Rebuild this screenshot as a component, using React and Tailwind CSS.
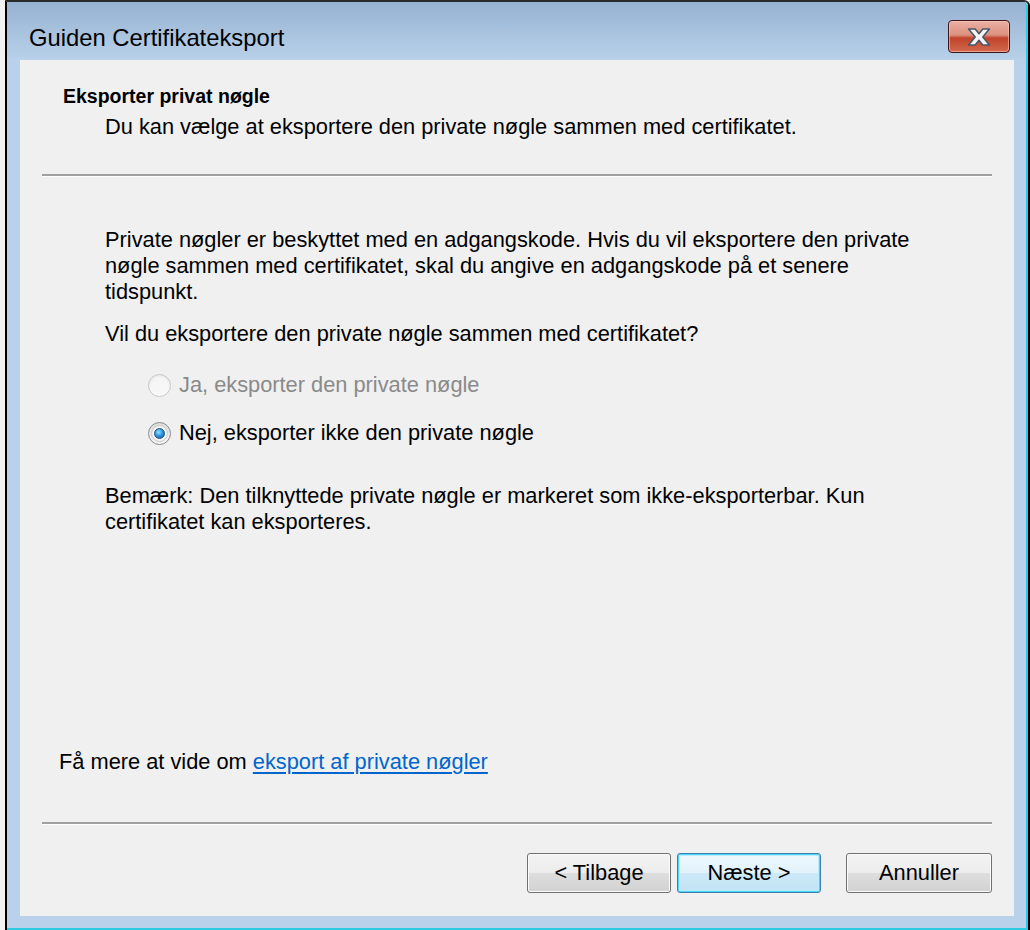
import React from 'react';

const font = { fontFamily: '"Liberation Sans", Arial, sans-serif' };

function CloseButton() {
  return (
    <div className="w-[62px] h-[33px] rounded-[4px] border border-[#3f1418] bg-[linear-gradient(to_bottom,#eab0a2_0%,#dc9180_45%,#c1432a_55%,#d3694e_100%)] shadow-[inset_0_0_0_1px_rgba(255,210,200,0.55)] flex items-center justify-center">
      <svg width="24" height="18" viewBox="-1 -1 24 19">
        <path
          d="M0 0 H7 L11 5 L15 0 H22 L15 8.5 L22 17 H15 L11 12 L7 17 H0 L7 8.5 Z"
          fill="#f4f4f4"
          stroke="#4b5568"
          strokeWidth="1.6"
          strokeLinejoin="round"
        />
      </svg>
    </div>
  );
}

function Radio({ checked, disabled, label }) {
  return (
    <div className="flex items-center h-[26px] pl-[128px]">
      {checked ? (
        <div className="w-[23px] h-[23px] rounded-full border border-[#8a8b8c] bg-[linear-gradient(to_bottom,#dcdcdc,#f6f6f6)] flex items-center justify-center">
          <div className="w-[17px] h-[17px] rounded-full bg-[#f4f4f4] border border-[#c8c8c8] flex items-center justify-center">
            <div className="w-[11px] h-[11px] rounded-full border border-[#1c4f86] bg-[radial-gradient(circle_at_40%_35%,#9fe2ff_0%,#2d9be0_45%,#0c4f95_100%)]" />
          </div>
        </div>
      ) : (
        <div className="w-[23px] h-[23px] rounded-full border border-[#c7c7c7] bg-[linear-gradient(to_bottom,#ececec,#fbfbfb)] flex items-center justify-center">
          <div className="w-[17px] h-[17px] rounded-full bg-[#f6f6f6]" />
        </div>
      )}
      <span className={`ml-[8px] ${disabled ? 'text-[#8a8a8a]' : 'text-black'}`}>{label}</span>
    </div>
  );
}

function Separator() {
  return (
    <div className="mx-[22px]">
      <div className="h-[2px] bg-[#a0a0a0]" />
      <div className="h-[1px] bg-white" />
    </div>
  );
}

function Button({ children, primary, width }) {
  const base = 'h-[40px] rounded-[3px] border flex items-center justify-center text-black';
  const look = primary
    ? 'border-[#3c7fb1] bg-[linear-gradient(to_bottom,#eef8fd_0%,#e1f2fb_50%,#cde9f7_50%,#c0e3f5_100%)] shadow-[inset_0_0_0_1px_#4fd4f8,inset_0_0_0_2px_#b6ecfb]'
    : 'border-[#707070] bg-[linear-gradient(to_bottom,#f3f3f3_0%,#ececec_50%,#dedede_50%,#d2d2d2_100%)] shadow-[inset_0_0_0_1px_#fbfbfb]';
  return (
    <div className={`${base} ${look} ${width}`}>{children}</div>
  );
}

export default function App() {
  return (
    <div className="w-[1030px] h-[930px] flex bg-[#eef0f3] overflow-hidden text-[21.8px] leading-[26px]" style={font}>
      <div className="w-[5px] h-full bg-[#f2f2f2]" />
      <div className="flex-1 h-full border-l-2 border-l-black border-r-2 border-r-black border-t-2 border-t-[#2a2a2a] rounded-tr-[6px]">
        <div className="h-full flex flex-col border-r-2 border-r-[#2ccbe2] border-b-2 border-b-[#2ccbe2] rounded-tr-[5px] bg-[linear-gradient(to_bottom,#96b2d1_0px,#b9d1ea_58px,#b9d1ea_100%)]">
          {/* title bar */}
          <div className="h-[58px] flex justify-between items-start pl-[22px] pr-[16px] pt-[18px]">
            <div className="text-[23.8px] leading-[30px] mt-[3px] text-black">Guiden Certifikateksport</div>
            <CloseButton />
          </div>

          {/* content */}
          <div className="flex-1 flex pl-[13px] pr-[12px] pb-[12px]">
            <div className="flex-1 bg-[#f0f0f0] flex flex-col">
              <div className="mt-[24px] pl-[43px] font-bold text-[19.5px] leading-[24px]">Eksporter privat nøgle</div>
              <div className="mt-[6px] pl-[85px]">Du kan vælge at eksportere den private nøgle sammen med certifikatet.</div>
              <div className="mt-[34px]">
                <Separator />
              </div>

              <div className="mt-[50px] pl-[85px] whitespace-nowrap">
                Private nøgler er beskyttet med en adgangskode. Hvis du vil eksportere den private
                <br />
                nøgle sammen med certifikatet, skal du angive en adgangskode på et senere
                <br />
                tidspunkt.
              </div>
              <div className="mt-[16px] pl-[85px]">Vil du eksportere den private nøgle sammen med certifikatet?</div>

              <div className="mt-[25px]">
                <Radio disabled label="Ja, eksporter den private nøgle" />
              </div>
              <div className="mt-[22px]">
                <Radio checked label="Nej, eksporter ikke den private nøgle" />
              </div>

              <div className="mt-[37px] pl-[85px] whitespace-nowrap">
                Bemærk: Den tilknyttede private nøgle er markeret som ikke-eksporterbar. Kun
                <br />
                certifikatet kan eksporteres.
              </div>

              <div className="flex-1" />

              <div className="pl-[39px]">
                Få mere at vide om{' '}
                <span className="text-[#0066cc] underline underline-offset-[3px]">eksport af private nøgler</span>
              </div>
              <div className="mt-[47px]">
                <Separator />
              </div>
              <div className="mt-[28px] mb-[23px] flex justify-end pr-[22px]">
                <Button width="w-[144px]">&lt; Tilbage</Button>
                <div className="w-[6px]" />
                <Button primary width="w-[144px]">Næste &gt;</Button>
                <div className="w-[25px]" />
                <Button width="w-[146px]">Annuller</Button>
              </div>
            </div>
          </div>
        </div>
      </div>
    </div>
  );
}
